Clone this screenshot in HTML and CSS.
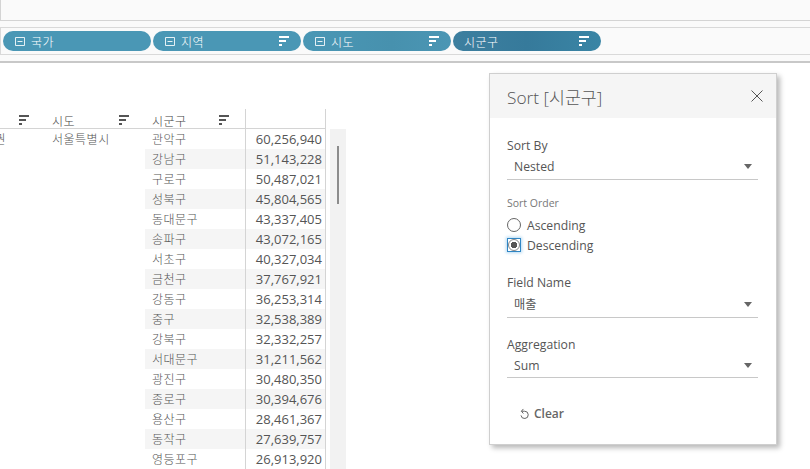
FILE: index.html
```html
<!DOCTYPE html>
<html lang="en">
<head>
    <meta charset="UTF-8">
    <meta name="viewport" content="width=device-width, initial-scale=1.0">
    <title>Sort</title>
    <link rel="stylesheet" href="styles.css">
</head>
<body>
    <svg class="defs" width="0" height="0">
        <symbol id="sort" viewBox="0 0 10 10"><path d="M0 0h10v2H0zM0 4h7v2H0zM0 8h3v2H0z"/></symbol>
        <symbol id="minus" viewBox="0 0 10 9"><path d="M.5.5h9v8h-9zM2.5 4.5h5" fill="none" stroke="currentColor"/></symbol>
    </svg>

    <div class="top">
        <div class="top-strip"></div>
        <div class="shelf">
            <div class="pill"><svg class="pill-minus"><use href="#minus"/></svg><span>국가</span></div>
            <div class="pill"><svg class="pill-minus"><use href="#minus"/></svg><span>지역</span><svg class="sort-icon"><use href="#sort"/></svg></div>
            <div class="pill pill-shade"><svg class="pill-minus"><use href="#minus"/></svg><span>시도</span><svg class="sort-icon"><use href="#sort"/></svg></div>
            <div class="pill pill-dark"><span>시군구</span><svg class="sort-icon"><use href="#sort"/></svg></div>
        </div>
    </div>

    <div class="sheet">
        <div class="crosstab">
            <div class="col col-region">
                <div class="head"><svg class="sort-icon"><use href="#sort"/></svg></div>
                <div class="cell">수도권</div>
            </div>
            <div class="col col-sido">
                <div class="head"><span>시도</span><svg class="sort-icon"><use href="#sort"/></svg></div>
                <div class="cell">서울특별시</div>
            </div>
            <div class="col col-gu">
                <div class="head"><span>시군구</span><svg class="sort-icon"><use href="#sort"/></svg></div>
                <div class="cell">관악구</div>
                <div class="cell">강남구</div>
                <div class="cell">구로구</div>
                <div class="cell">성북구</div>
                <div class="cell">동대문구</div>
                <div class="cell">송파구</div>
                <div class="cell">서초구</div>
                <div class="cell">금천구</div>
                <div class="cell">강동구</div>
                <div class="cell">중구</div>
                <div class="cell">강북구</div>
                <div class="cell">서대문구</div>
                <div class="cell">광진구</div>
                <div class="cell">종로구</div>
                <div class="cell">용산구</div>
                <div class="cell">동작구</div>
                <div class="cell">영등포구</div>
            </div>
            <div class="col col-value">
                <div class="head"></div>
                <div class="cell">60,256,940</div>
                <div class="cell">51,143,228</div>
                <div class="cell">50,487,021</div>
                <div class="cell">45,804,565</div>
                <div class="cell">43,337,405</div>
                <div class="cell">43,072,165</div>
                <div class="cell">40,327,034</div>
                <div class="cell">37,767,921</div>
                <div class="cell">36,253,314</div>
                <div class="cell">32,538,389</div>
                <div class="cell">32,332,257</div>
                <div class="cell">31,211,562</div>
                <div class="cell">30,480,350</div>
                <div class="cell">30,394,676</div>
                <div class="cell">28,461,367</div>
                <div class="cell">27,639,757</div>
                <div class="cell">26,913,920</div>
            </div>
        </div>
        <div class="scroll-track"><div class="scroll-thumb"></div></div>
    </div>

    <div class="dialog">
        <div class="dialog-title">
            <span>Sort [시군구]</span>
            <svg class="close" viewBox="0 0 12 12"><path d="M.5.5l11 11M11.5.5l-11 11"/></svg>
        </div>
        <div class="dialog-body">
            <div class="field">
                <div class="field-label">Sort By</div>
                <div class="select"><span>Nested</span><i class="caret"></i></div>
            </div>
            <div class="order">
                <div class="order-label">Sort Order</div>
                <div class="radio-row"><span class="radio"></span>Ascending</div>
                <div class="radio-row"><span class="radio-focus"><span class="radio radio-on"></span></span>Descending</div>
            </div>
            <div class="field">
                <div class="field-label">Field Name</div>
                <div class="select select-wide"><span>매출</span><i class="caret"></i></div>
            </div>
            <div class="field">
                <div class="field-label">Aggregation</div>
                <div class="select select-short"><span>Sum</span><i class="caret"></i></div>
            </div>
            <div class="clear">
                <svg class="clear-icon" viewBox="0 0 11 12"><path d="M3 3.5h3.2a4 4 0 1 1-4 4.6"/><path d="M4.8 1L2.6 3.5 4.8 6"/></svg>
                Clear
            </div>
        </div>
    </div>
</body>
</html>
```

FILE: styles.css
```css
html, body {
    height: 100%;
}
body {
    margin: 0;
    background: #fff;
    color: #555;
    font-family: "Open Sans", "Noto Sans CJK KR", sans-serif;
    font-size: 13px;
    overflow: hidden;
    position: relative;
}
.defs {
    position: absolute;
}
.top {
    height: 61px;
    background: #fafafa;
    border-bottom: 2px solid #c8c8c8;
}
.top-strip {
    height: 20px;
    border-left: 1px solid #d4d4d4;
    border-bottom: 1px solid #d4d4d4;
}
.shelf {
    display: flex;
    gap: 2px;
    height: 28px;
    margin-top: 6px;
    padding: 3px 0 0 2px;
    box-sizing: border-box;
    border-top: 1px solid #d9d9d9;
    border-bottom: 1px solid #d9d9d9;
    border-left: 1px solid #d9d9d9;
}
.pill {
    display: flex;
    align-items: center;
    width: 148px;
    height: 20px;
    padding: 0 12px;
    box-sizing: border-box;
    border-radius: 10px;
    background: #4a97b5;
    color: #fff;
    font-family: "Noto Sans CJK KR", sans-serif;
    font-size: 12px;
    font-weight: 300;
    letter-spacing: 0.5px;
}
.pill-shade {
    background: linear-gradient(90deg, #4a97b5, #4791ae 60%, #4b96b4);
}
.pill-dark {
    padding-left: 11px;
    background: linear-gradient(90deg, #3d7f9f, #367a9b 50%, #3a85a5);
}
.pill-minus {
    width: 10px;
    height: 9px;
    margin-right: 6px;
    color: rgba(255, 255, 255, 0.85);
}
.pill .sort-icon {
    margin-left: auto;
    fill: #fff;
}
.sort-icon {
    width: 10px;
    height: 10px;
    fill: #555;
}
.sheet {
    display: flex;
    align-items: flex-start;
    padding-top: 46px;
}
.crosstab {
    display: flex;
    margin-left: -55px;
    border-right: 1px solid #d4d4d4;
}
.col {
    width: 100px;
    flex: none;
}
.col-value {
    width: 80px;
    border-left: 1px solid #d4d4d4;
    box-sizing: border-box;
}
.head {
    display: flex;
    align-items: center;
    height: 16px;
    padding: 3px 16px 0 7px;
    border-bottom: 1px solid #d4d4d4;
    font-family: "Noto Sans CJK KR", sans-serif;
    font-size: 12px;
    font-weight: 300;
    letter-spacing: 0.5px;
    color: #444;
}
.head .sort-icon {
    margin-left: auto;
}
.cell {
    height: 20px;
    line-height: 20px;
    padding-left: 7px;
    font-family: "Noto Sans CJK KR", sans-serif;
    font-size: 12px;
    font-weight: 300;
    letter-spacing: 0.5px;
    white-space: nowrap;
    overflow: hidden;
}
.col-region .cell {
    padding: 0 39px 0 0;
    text-align: right;
}
.col-gu .cell:nth-of-type(odd),
.col-value .cell:nth-of-type(odd) {
    background: #f5f5f5;
}
.col-value .cell {
    padding: 0 3px 0 0;
    text-align: right;
    font-family: "Open Sans", sans-serif;
    font-size: 13px;
    font-weight: 400;
    letter-spacing: 0;
}
.scroll-track {
    width: 16px;
    height: 340px;
    margin: 20px 0 0 4px;
    padding-top: 17px;
    box-sizing: border-box;
    background: #f2f2f2;
}
.scroll-thumb {
    width: 2px;
    height: 58px;
    margin-left: 7px;
    background: #8c8c8c;
}
.dialog {
    position: absolute;
    left: 489px;
    top: 73px;
    width: 288px;
    height: 372px;
    box-sizing: border-box;
    background: #fff;
    border: 1px solid #cfcfcf;
    box-shadow: 3px 3px 5px rgba(0, 0, 0, 0.28);
}
.dialog-title {
    display: flex;
    align-items: center;
    justify-content: space-between;
    height: 44px;
    padding: 0 13px 0 17px;
    background: #f5f5f5;
    font-size: 17.3px;
    font-weight: 300;
    color: #555;
}
.close {
    width: 12px;
    height: 12px;
    fill: none;
    stroke: #555;
}
.dialog-body {
    padding: 19px 18px 0 17px;
}
.field {
    margin-bottom: 17px;
}
.field-label {
    height: 18px;
    line-height: 18px;
    font-size: 12.2px;
}
.select {
    display: flex;
    align-items: center;
    justify-content: space-between;
    height: 22px;
    padding: 0 6px 2px 7px;
    border-bottom: 1px solid #c8c8c8;
    font-size: 12.2px;
}
.select-wide {
    height: 24px;
    padding-bottom: 1px;
    margin-bottom: 18px;
}
.select-short {
    height: 23px;
    padding-bottom: 0;
}
.caret {
    width: 0;
    height: 0;
    border-left: 4px solid transparent;
    border-right: 4px solid transparent;
    border-top: 5px solid #666;
}
.order {
    margin-top: -3px;
    margin-bottom: 19px;
}
.order-label {
    height: 18px;
    line-height: 18px;
    margin-bottom: 3px;
    font-size: 10.5px;
    color: #777;
}
.radio-row {
    display: flex;
    align-items: center;
    gap: 6px;
    height: 20px;
    font-size: 12.2px;
}
.radio-row:last-child {
    margin-bottom: 1px;
}
.radio {
    width: 14px;
    height: 14px;
    box-sizing: border-box;
    border: 1px solid #666;
    border-radius: 50%;
    background: #fff;
}
.radio-focus {
    display: flex;
    align-items: center;
    justify-content: center;
    width: 14px;
    height: 14px;
    box-sizing: border-box;
    border: 1px solid #2f86c5;
    box-shadow: 0 0 3px 1px #b5d9f2;
}
.radio-on {
    width: 12px;
    height: 12px;
    border-color: #888;
    background: radial-gradient(circle, #555 3px, #fff 3.5px);
}
.clear {
    display: flex;
    align-items: center;
    gap: 5px;
    margin: 27px 0 0 12px;
    font-size: 12px;
    font-weight: 600;
    color: #666;
}
.clear-icon {
    width: 10px;
    height: 11px;
    fill: none;
    stroke: #555;
}
```
